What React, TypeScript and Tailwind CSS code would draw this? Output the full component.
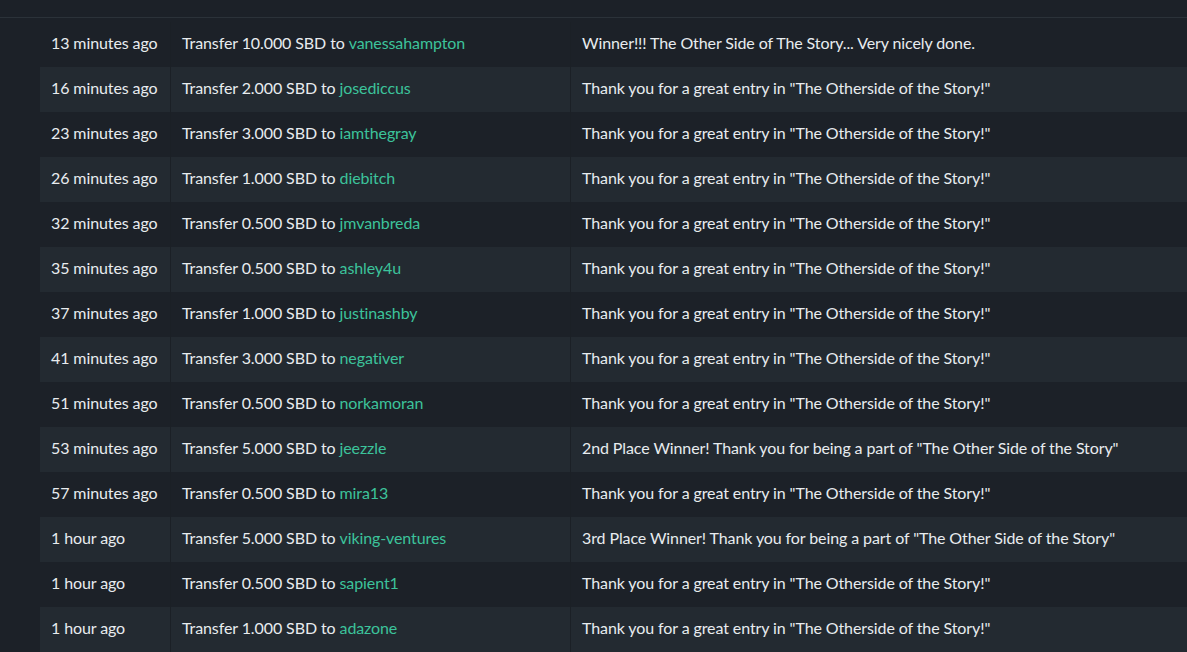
import React from "react";

type Row = { when: string; amount: string; to: string; memo: string };

const OTHERSIDE = 'Thank you for a great entry in "The Otherside of the Story!"';

const rows: Row[] = [
  { when: "13 minutes ago", amount: "10.000", to: "vanessahampton", memo: "Winner!!! The Other Side of The Story... Very nicely done." },
  { when: "16 minutes ago", amount: "2.000", to: "josediccus", memo: OTHERSIDE },
  { when: "23 minutes ago", amount: "3.000", to: "iamthegray", memo: OTHERSIDE },
  { when: "26 minutes ago", amount: "1.000", to: "diebitch", memo: OTHERSIDE },
  { when: "32 minutes ago", amount: "0.500", to: "jmvanbreda", memo: OTHERSIDE },
  { when: "35 minutes ago", amount: "0.500", to: "ashley4u", memo: OTHERSIDE },
  { when: "37 minutes ago", amount: "1.000", to: "justinashby", memo: OTHERSIDE },
  { when: "41 minutes ago", amount: "3.000", to: "negativer", memo: OTHERSIDE },
  { when: "51 minutes ago", amount: "0.500", to: "norkamoran", memo: OTHERSIDE },
  { when: "53 minutes ago", amount: "5.000", to: "jeezzle", memo: '2nd Place Winner! Thank you for being a part of "The Other Side of the Story"' },
  { when: "57 minutes ago", amount: "0.500", to: "mira13", memo: OTHERSIDE },
  { when: "1 hour ago", amount: "5.000", to: "viking-ventures", memo: '3rd Place Winner! Thank you for being a part of "The Other Side of the Story"' },
  { when: "1 hour ago", amount: "0.500", to: "sapient1", memo: OTHERSIDE },
  { when: "1 hour ago", amount: "1.000", to: "adazone", memo: OTHERSIDE },
];

export default function App() {
  return (
    <div
      className="w-[1187px] h-[652px] overflow-hidden bg-[#1c2128] text-[#e8ecef] text-[16px]"
      style={{ fontFamily: '"Lato", "Noto Sans", sans-serif' }}
    >
      <div className="h-[18px] border-b border-[#2b3239]" />
      <div className="pl-[40px] pt-[4px]">
        {rows.map((r, i) => (
          <div
            key={i}
            className={`flex h-[45px] items-stretch tracking-[-0.1px] ${i % 2 === 1 ? "bg-[#232a31]" : ""}`}
          >
            <div className="w-[131px] flex items-center pl-[11px] pb-[4px] border-r border-[#1b2026]">
              {r.when}
            </div>
            <div className="w-[400px] flex items-center pl-[11px] pb-[4px] border-r border-[#1b2026]">
              Transfer {r.amount} SBD to&nbsp;<span className="text-[#3cc39b]">{r.to}</span>
            </div>
            <div className="flex-1 flex items-center pl-[11px] pb-[4px]">{r.memo}</div>
          </div>
        ))}
      </div>
    </div>
  );
}
